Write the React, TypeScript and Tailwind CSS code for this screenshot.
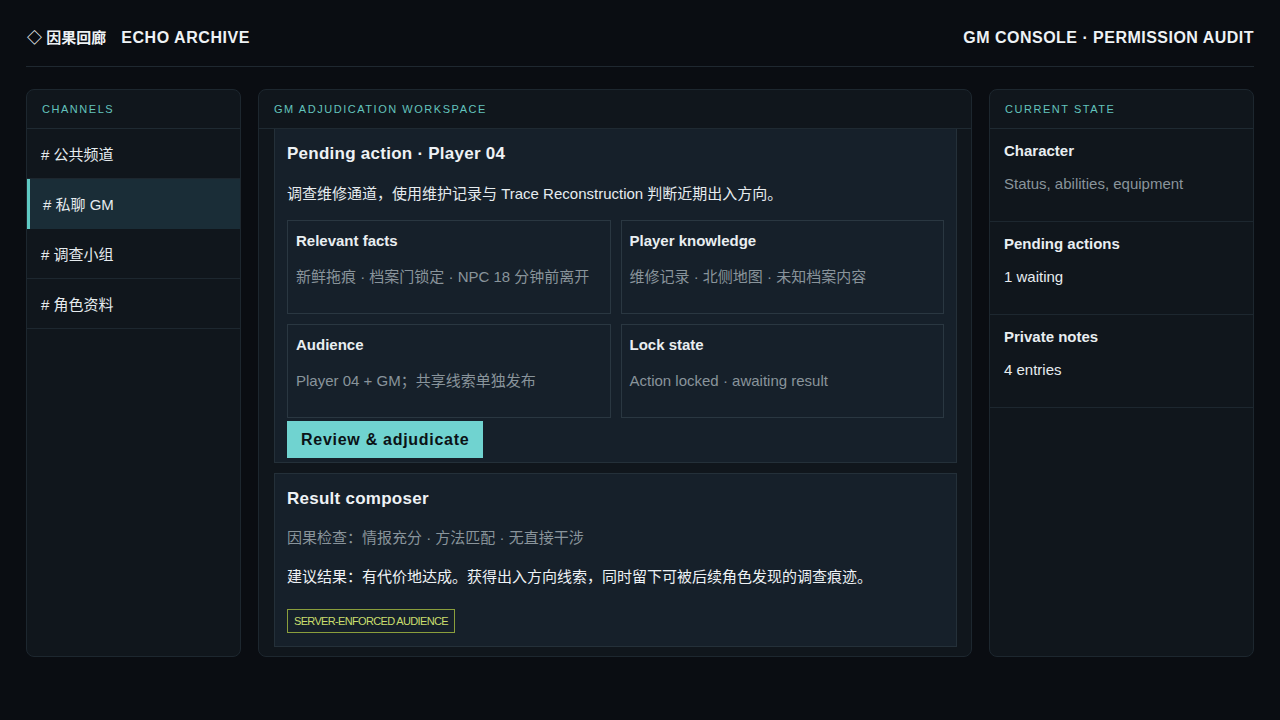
import React from "react";

const channels = [
  { name: "公共频道", active: false },
  { name: "私聊 GM", active: true },
  { name: "调查小组", active: false },
  { name: "角色资料", active: false },
];

const facts = [
  { title: "Relevant facts", value: "新鲜拖痕 · 档案门锁定 · NPC 18 分钟前离开" },
  { title: "Player knowledge", value: "维修记录 · 北侧地图 · 未知档案内容" },
  { title: "Audience", value: "Player 04 + GM；共享线索单独发布" },
  { title: "Lock state", value: "Action locked · awaiting result" },
];

const stateRows = [
  { title: "Character", value: "Status, abilities, equipment", muted: true },
  { title: "Pending actions", value: "1 waiting", muted: false },
  { title: "Private notes", value: "4 entries", muted: false },
];

// small uppercase caption used at the top of every panel
const PanelLabel: React.FC<{ children: React.ReactNode }> = ({ children }) => (
  <div className="h-[39px] shrink-0 flex items-center px-[15px] border-b border-[#1f2a32] text-[11px] tracking-[0.14em] text-[#63c3bd]">
    {children}
  </div>
);

const App: React.FC = () => {
  return (
    <div className="w-[1280px] h-[720px] bg-[#0a0d12] px-[26px] font-['Liberation_Sans','Noto_Sans_CJK_SC',sans-serif] text-[#e3e9ed] overflow-hidden">
      {/* Top bar */}
      <header className="h-[67px] pt-[26px] flex items-start justify-between border-b border-[#1f2830]">
        <div className="flex items-center font-bold leading-[24px] text-[#eef2f5]">
          <span className="ml-[1px] text-[15px]">◇ 因果回廊</span>
          <span className="ml-[15px] text-[16px] tracking-[0.035em]">ECHO ARCHIVE</span>
        </div>
        <div className="text-[16px] font-bold leading-[24px] tracking-[0.03em] text-[#eef2f5]">
          GM CONSOLE · PERMISSION AUDIT
        </div>
      </header>

      <main className="mt-[22px] grid grid-cols-[215px_714px_1fr] gap-[17px] h-[568px]">
        {/* Channels */}
        <aside className="flex flex-col bg-[#10161c] border border-[#1d272f] rounded-lg overflow-hidden">
          <PanelLabel>CHANNELS</PanelLabel>
          {channels.map((c) => (
            <div
              key={c.name}
              className={
                c.active
                  ? "h-[50px] flex items-center pt-[2px] pl-[13px] border-l-[3px] border-[#5fc9c3] bg-[#1a2d37] text-[15px] text-[#e6ecef]"
                  : "h-[50px] flex items-center pt-[3px] px-[14px] border-b border-[#1d272f] text-[15px] text-[#e6ecef]"
              }
            >
              # {c.name}
            </div>
          ))}
        </aside>

        {/* Workspace */}
        <section className="flex flex-col bg-[#10161c] border border-[#1d272f] rounded-lg overflow-hidden">
          <PanelLabel>GM ADJUDICATION WORKSPACE</PanelLabel>
          <div className="flex-1 flex flex-col pl-[15px] pr-[14px] pb-[10px] gap-[10px] overflow-hidden">
            <div className="bg-[#16202a] border-x border-b border-[#243039] px-[12px] pt-[14px] pb-[4px]">
              <h2 className="text-[17px] font-bold leading-[22px] tracking-[0.015em] text-[#eef2f5]">
                Pending action · Player 04
              </h2>
              <p className="mt-[18px] text-[15px] leading-[22px] text-[#e6ecef]">
                调查维修通道，使用维护记录与 Trace Reconstruction 判断近期出入方向。
              </p>
              <div className="mt-[15px] grid grid-cols-2 gap-[10px]">
                {facts.map((f) => (
                  <div
                    key={f.title}
                    className="h-[94px] border border-[#2a3741] px-[8px] pt-[10px]"
                  >
                    <div className="text-[15px] font-bold leading-[20px] text-[#e9eef1]">
                      {f.title}
                    </div>
                    <div className="mt-[16px] text-[15px] leading-[20px] text-[#89949b]">
                      {f.value}
                    </div>
                  </div>
                ))}
              </div>
              <button className="mt-[3px] h-[37px] px-[14px] bg-[#70d3d0] text-[16px] font-bold tracking-[0.045em] text-[#0b1216]">
                Review &amp; adjudicate
              </button>
            </div>

            {/* Result composer */}
            <div className="bg-[#16202a] border border-[#243039] px-[12px] pt-[14px] pb-[13px]">
              <h2 className="text-[17px] font-bold leading-[22px] tracking-[0.015em] text-[#eef2f5]">
                Result composer
              </h2>
              <p className="mt-[17px] text-[15px] leading-[22px] text-[#89949b]">
                因果检查：情报充分 · 方法匹配 · 无直接干涉
              </p>
              <p className="mt-[17px] text-[15px] leading-[22px] text-[#eef2f5]">
                建议结果：有代价地达成。获得出入方向线索，同时留下可被后续角色发现的调查痕迹。
              </p>
              <div className="mt-[21px] inline-flex h-[24px] items-center px-[6px] border border-[#8a9e3c] text-[11px] tracking-[-0.06em] text-[#c9de6e]">
                SERVER-ENFORCED AUDIENCE
              </div>
            </div>
          </div>
        </section>

        {/* Current state */}
        <aside className="flex flex-col bg-[#10161c] border border-[#1d272f] rounded-lg overflow-hidden">
          <PanelLabel>CURRENT STATE</PanelLabel>
          {stateRows.map((r) => (
            <div
              key={r.title}
              className="h-[93px] px-[14px] pt-[12px] border-b border-[#1d272f]"
            >
              <div className="text-[15px] font-bold leading-[20px] text-[#e9eef1]">
                {r.title}
              </div>
              <div
                className={
                  r.muted
                    ? "mt-[13px] text-[15px] leading-[20px] text-[#89949b]"
                    : "mt-[13px] text-[15px] leading-[20px] text-[#e6ecef]"
                }
              >
                {r.value}
              </div>
            </div>
          ))}
        </aside>
      </main>
    </div>
  );
};

export default App;
